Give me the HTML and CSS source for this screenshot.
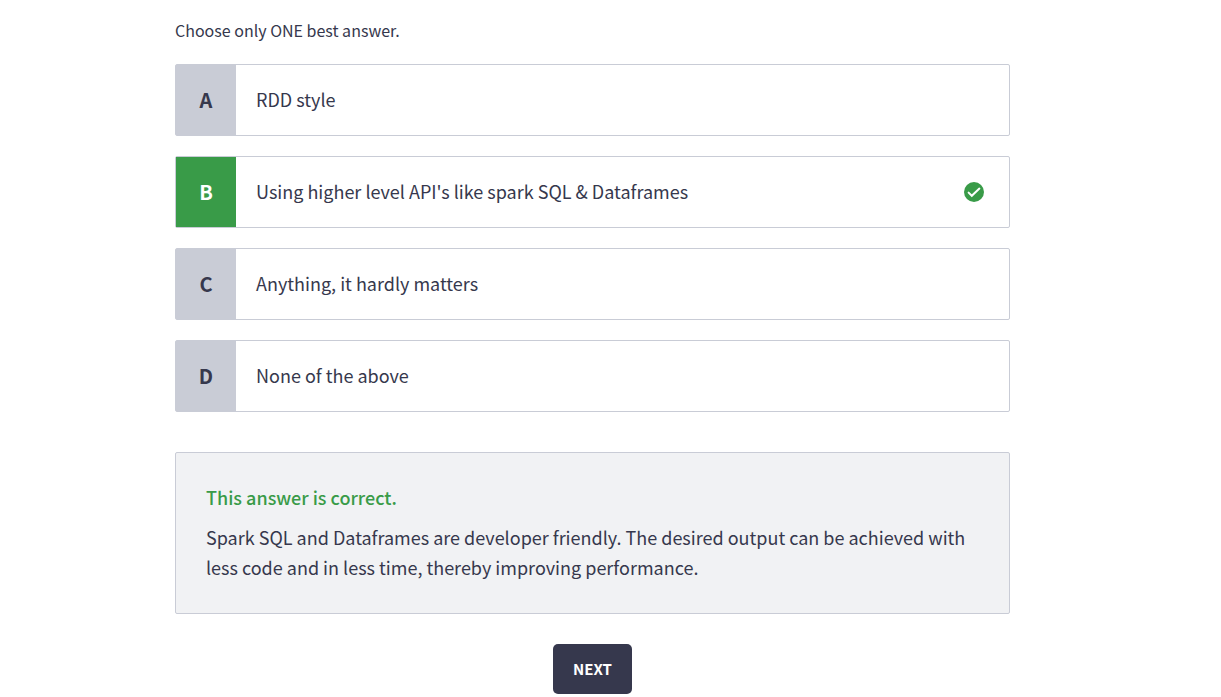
FILE: index.html
```html
<!DOCTYPE html>
<html lang="en">
<head>
<meta charset="utf-8">
<meta name="viewport" content="width=device-width, initial-scale=1">
<title>Quiz</title>
<link rel="stylesheet" href="styles.css">
</head>
<body>
<main class="quiz">
  <form class="quiz-form">
    <fieldset class="options">
      <legend class="prompt">Choose only ONE best answer.</legend>
      <label class="option">
        <input class="option-input" type="radio" name="answer" value="a">
        <span class="option-letter">A</span>
        <span class="option-text">RDD style</span>
      </label>
      <label class="option">
        <input class="option-input" type="radio" name="answer" value="b" checked>
        <span class="option-letter">B</span>
        <span class="option-text">Using higher level API's like spark SQL &amp; Dataframes</span>
        <svg class="option-check" viewBox="0 0 20 20" aria-hidden="true">
          <circle cx="10" cy="10" r="10" fill="#399b48"/>
          <path d="M4.6 10.6l3.2 3.2 7.6-7.2" fill="none" stroke="#fff" stroke-width="2" stroke-linecap="round"/>
        </svg>
      </label>
      <label class="option">
        <input class="option-input" type="radio" name="answer" value="c">
        <span class="option-letter">C</span>
        <span class="option-text">Anything, it hardly matters</span>
      </label>
      <label class="option">
        <input class="option-input" type="radio" name="answer" value="d">
        <span class="option-letter">D</span>
        <span class="option-text">None of the above</span>
      </label>
    </fieldset>
    <section class="feedback">
      <h2 class="feedback-title">This answer is correct.</h2>
      <p class="feedback-text">Spark SQL and Dataframes are developer friendly. The desired output can be achieved with less code and in less time, thereby improving performance.</p>
    </section>
    <button class="next" type="button">NEXT</button>
  </form>
</main>
</body>
</html>
```
FILE: styles.css
```css
* {
  box-sizing: border-box;
}

body {
  margin: 0;
  background: #fff;
  color: #36384d;
  font-family: "Noto Sans CJK SC", "Noto Sans", sans-serif;
  font-size: 18px;
  line-height: 30px;
}

.quiz {
  padding: 15px 211px 0 175px;
}

.quiz-form {
  display: flex;
  flex-direction: column;
}

.options {
  display: flex;
  flex-direction: column;
  gap: 20px;
  margin: 0;
  padding: 0;
  border: 0;
  min-width: 0;
}

.prompt {
  padding: 0;
  margin-bottom: 19px;
  font-size: 16px;
}

.option {
  position: relative;
  display: flex;
  align-items: stretch;
  min-height: 72px;
  border: 1px solid #c9ccd6;
  border-radius: 2px;
  cursor: pointer;
}

.option-input {
  position: absolute;
  inset: 0;
  margin: 0;
  appearance: none;
  cursor: pointer;
}

.option-letter {
  display: flex;
  flex: none;
  align-items: center;
  justify-content: center;
  width: 60px;
  background: #c9ccd6;
  font-size: 20px;
  font-weight: 700;
}

.option-input:checked + .option-letter {
  background: #399b48;
  color: #fff;
}

.option-text {
  flex: 1;
  padding: 19px 20px 21px;
}

.option-check {
  flex: none;
  align-self: center;
  width: 20px;
  height: 20px;
  margin-right: 25px;
}

.feedback {
  margin-top: 40px;
  padding: 29px 30px 31px;
  border: 1px solid #c9ccd6;
  border-radius: 2px;
  background: #f1f2f4;
}

.feedback-title {
  margin: 0 0 10px;
  color: #399b48;
  font-size: 18px;
  font-weight: 500;
}

.feedback-text {
  margin: 0;
}

.next {
  align-self: center;
  margin-top: 30px;
  padding: 10px 20px;
  border: 0;
  border-radius: 5px;
  background: #36384d;
  color: #fff;
  font: inherit;
  font-size: 15px;
  font-weight: 700;
  cursor: pointer;
}
```
